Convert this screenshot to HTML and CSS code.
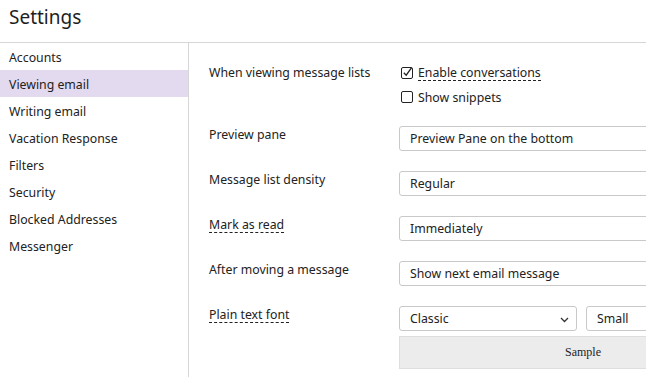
FILE: index.html
```html
<!DOCTYPE html>
<html>
<head>
<meta charset="utf-8">
<link rel="stylesheet" href="styles.css">
</head>
<body>
<div class="page">
  <header class="header"><h1 class="title">Settings</h1></header>
  <div class="main">
    <nav class="sidebar">
      <div class="nav-item">Accounts</div>
      <div class="nav-item active">Viewing email</div>
      <div class="nav-item">Writing email</div>
      <div class="nav-item">Vacation Response</div>
      <div class="nav-item">Filters</div>
      <div class="nav-item">Security</div>
      <div class="nav-item">Blocked Addresses</div>
      <div class="nav-item">Messenger</div>
    </nav>
    <section class="content">
      <div class="row row-checks">
        <div class="label label-tall">When viewing message lists</div>
        <div class="control">
          <label class="check">
            <span class="box"><svg width="13" height="13" viewBox="0 0 13 13"><rect x="0.5" y="1.5" width="11" height="11" rx="1.5" fill="#fff" stroke="#222"/><path d="M2.8 6.8 L5.2 9.2 L10.6 1.6" fill="none" stroke="#222" stroke-width="1.3"/></svg></span>
            <span class="dashed">Enable conversations</span>
          </label>
          <label class="check">
            <span class="box"><svg width="13" height="13" viewBox="0 0 13 13"><rect x="0.5" y="1.5" width="11" height="11" rx="1.5" fill="#fff" stroke="#222"/></svg></span>
            <span>Show snippets</span>
          </label>
        </div>
      </div>
      <div class="row">
        <div class="label">Preview pane</div>
        <div class="control"><div class="select">Preview Pane on the bottom</div></div>
      </div>
      <div class="row">
        <div class="label">Message list density</div>
        <div class="control"><div class="select">Regular</div></div>
      </div>
      <div class="row">
        <div class="label"><span class="dashed">Mark as read</span></div>
        <div class="control"><div class="select">Immediately</div></div>
      </div>
      <div class="row">
        <div class="label">After moving a message</div>
        <div class="control"><div class="select">Show next email message</div></div>
      </div>
      <div class="row">
        <div class="label"><span class="dashed">Plain text font</span></div>
        <div class="control">
          <div class="font-pair">
            <div class="select select-half">Classic<svg class="chev" width="9" height="6" viewBox="0 0 9 6"><path d="M1 1 L4.5 4.5 L8 1" fill="none" stroke="#333" stroke-width="1.3"/></svg></div>
            <div class="select select-half">Small</div>
          </div>
          <div class="sample">Sample</div>
        </div>
      </div>
    </section>
  </div>
</div>
</body>
</html>
```
FILE: styles.css
```css
html, body {
  margin: 0;
  padding: 0;
  background: #fff;
}
body {
  font-family: "Noto Sans", "Open Sans", sans-serif;
  font-size: 12.3px;
  color: #222;
  overflow: hidden;
}
.page {
  width: 646px;
  height: 377px;
  display: flex;
  flex-direction: column;
  overflow: hidden;
}
.header {
  height: 42px;
  border-bottom: 1px solid #d6d6d6;
  padding-left: 9px;
  display: flex;
  align-items: center;
  flex-shrink: 0;
}
.title {
  margin: 0;
  font-weight: normal;
  font-size: 19px;
  color: #1e1e1e;
  line-height: 1;
  position: relative;
  top: -4px;
}
.main {
  flex: 1;
  display: flex;
  min-height: 0;
}
.sidebar {
  width: 188px;
  flex-shrink: 0;
  border-right: 1px solid #d6d6d6;
}
.nav-item {
  height: 25px;
  line-height: 25px;
  padding-top: 2px;
  padding-left: 9px;
}
.nav-item.active {
  background: #e3daf0;
}
.content {
  padding: 18px 0 0 20px;
  flex: 1;
  min-width: 0;
}
.row {
  display: flex;
  margin-bottom: 20px;
}
.row-checks {
  margin-bottom: 17px;
}
.label {
  width: 190px;
  flex-shrink: 0;
  line-height: 18px;
}
.label-tall {
  line-height: 24px;
}
.control {
  width: 368px;
  flex-shrink: 0;
}
.check {
  display: flex;
  align-items: center;
  height: 24px;
  padding-left: 2px;
}
.box {
  display: flex;
  margin-right: 4px;
  position: relative;
  top: -1px;
}
.dashed {
  border-bottom: 1px dashed #222;
  line-height: 15px;
  display: inline-block;
}
.select {
  height: 25px;
  box-sizing: border-box;
  border: 1px solid #c9c9c9;
  border-radius: 3px;
  background: #fff;
  padding-left: 10px;
  display: flex;
  align-items: center;
  position: relative;
}
.font-pair {
  display: flex;
  gap: 9px;
}
.select-half {
  width: 178px;
}
.chev {
  position: absolute;
  right: 7px;
  top: 10px;
}
.sample {
  margin-top: 5px;
  height: 33px;
  box-sizing: border-box;
  border: 1px solid #dedede;
  background: #ececec;
  display: flex;
  align-items: center;
  justify-content: center;
  font-family: "Liberation Serif", serif;
  font-size: 12px;
  color: #222;
}
```
